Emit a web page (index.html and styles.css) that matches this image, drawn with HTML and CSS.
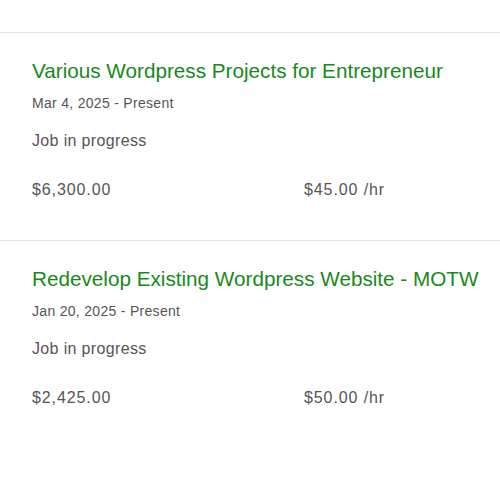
FILE: index.html
```html
<!DOCTYPE html>
<html lang="en">
<head>
<meta charset="utf-8">
<link rel="stylesheet" href="styles.css">
</head>
<body>
<div class="list">
  <section class="job">
    <h2 class="title">Various Wordpress Projects for Entrepreneur</h2>
    <div class="dates">Mar 4, 2025 - Present</div>
    <div class="status">Job in progress</div>
    <div class="amounts">
      <span>$6,300.00</span>
      <span>$45.00 /hr</span>
    </div>
  </section>
  <section class="job">
    <h2 class="title">Redevelop Existing Wordpress Website - MOTW</h2>
    <div class="dates">Jan 20, 2025 - Present</div>
    <div class="status">Job in progress</div>
    <div class="amounts">
      <span>$2,425.00</span>
      <span>$50.00 /hr</span>
    </div>
  </section>
</div>
</body>
</html>
```
FILE: styles.css
```css
html, body {
  margin: 0;
  padding: 0;
  background: #fff;
}
body {
  font-family: "Liberation Sans", Arial, sans-serif;
  color: #555;
}
.list {
  padding-top: 32px;
}
.job {
  border-top: 1px solid #e4e4e4;
  padding: 26px 16px 0 32px;
  height: 208px;
  box-sizing: border-box;
}
.title {
  margin: 0;
  font-size: 20.7px;
  line-height: 24px;
  font-weight: normal;
  color: #178a1a;
  white-space: nowrap;
}
.dates {
  margin-top: 10px;
  font-size: 14px;
  line-height: 20px;
  letter-spacing: 0.3px;
}
.status {
  margin-top: 16px;
  font-size: 16px;
  line-height: 24px;
  letter-spacing: 0.35px;
}
.amounts {
  margin-top: 25px;
  display: grid;
  grid-template-columns: 272px 1fr;
  font-size: 16px;
  line-height: 24px;
  letter-spacing: 0.9px;
}
```
